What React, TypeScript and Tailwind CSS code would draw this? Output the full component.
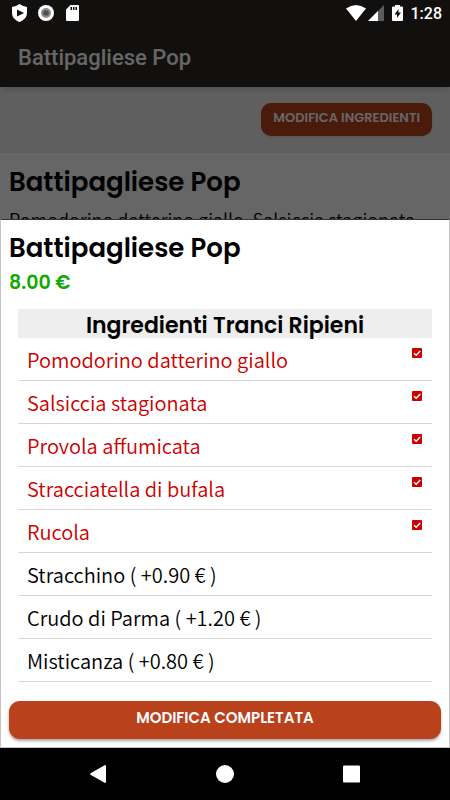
import { useState } from "react";

const heading = "font-['Poppins','Inter',sans-serif] font-semibold";
const body = "font-['Noto_Sans_CJK_JP','Noto_Sans',sans-serif] font-[350]";

interface Ingredient {
  id: string;
  name: string;
  price?: string;
}

const ingredients: Ingredient[] = [
  { id: "pomodorino", name: "Pomodorino datterino giallo" },
  { id: "salsiccia", name: "Salsiccia stagionata" },
  { id: "provola", name: "Provola affumicata" },
  { id: "stracciatella", name: "Stracciatella di bufala" },
  { id: "rucola", name: "Rucola" },
  { id: "stracchino", name: "Stracchino", price: "0.90" },
  { id: "crudo", name: "Crudo di Parma", price: "1.20" },
  { id: "misticanza", name: "Misticanza", price: "0.80" },
];

const StatusBar = () => (
  <div className="absolute inset-x-0 top-0 flex h-[26px] items-center justify-between pr-2 pl-3 text-white">
    <div className="flex items-center gap-3">
      <svg width="15" height="18" viewBox="0 0 15 18" fill="currentColor">
        <path fillRule="evenodd" d="M7.5 0Q11 2.500 15 3v6c0 5-4 7.500-7.500 9C4 16.500 0 14 0 9V3Q4 2.500 7.500 0zM5 5.500v7l7-3.500z" />
      </svg>
      <svg className="-ml-px" width="16" height="16" viewBox="0 0 16 16">
        <circle cx="8" cy="8" r="8" fill="#fff" />
        <circle cx="8" cy="8" r="5" fill="#8a8a8a" />
        <circle cx="8" cy="8" r="2.800" fill="#505050" />
      </svg>
      <svg width="13" height="16" viewBox="0 0 13 16" fill="currentColor">
        <path fillRule="evenodd" d="M4.500 0H12q1 0 1 1v14q0 1-1 1H1q-1 0-1-1V4.500zM4.500 2v3H6V2zM7 2v3h1.500V2zM9.500 2v3H11V2z" />
      </svg>
    </div>
    <div className="flex items-center">
      <svg width="20" height="16" viewBox="0 0 20 16" fill="currentColor">
        <path d="M0 3.500Q10-3.500 20 3.500L10 16z" />
      </svg>
      <svg className="ml-0.5" width="16" height="16" viewBox="0 0 16 16">
        <path d="M16 0v16H0z" fill="#5c5c5c" />
        <path d="M10 6v10H0z" fill="#fff" />
      </svg>
      <svg className="ml-2" width="11" height="16" viewBox="0 0 11 16" fill="currentColor">
        <path fillRule="evenodd" d="M3 1.500V0h5v1.500h2q1 0 1 1V15q0 1-1 1H1q-1 0-1-1V2.500q0-1 1-1zM6.500 4 2.500 9.500H5V13l4-5.500H6.500z" />
      </svg>
      <span className="ml-2 pt-0.5 font-['Roboto',sans-serif] text-base font-medium">1:28</span>
    </div>
  </div>
);

const NavBar = () => (
  <nav className="flex h-13 items-center justify-around bg-black px-8.5 text-white">
    <button type="button" aria-label="Indietro">
      <svg width="18" height="18" viewBox="0 0 18 18" fill="currentColor">
        <path d="M16 0q1 0 1 1v16q0 1-1 1L1.500 9.800q-1-.800 0-1.600z" />
      </svg>
    </button>
    <button type="button" aria-label="Home">
      <svg width="18" height="18" viewBox="0 0 18 18" fill="currentColor">
        <circle cx="9" cy="9" r="9" />
      </svg>
    </button>
    <button type="button" aria-label="Recenti">
      <svg width="18" height="18" viewBox="0 0 18 18" fill="currentColor">
        <rect x="0" y="0.500" width="17" height="17" rx="1" />
      </svg>
    </button>
  </nav>
);

interface IngredientRowProps {
  item: Ingredient;
  checked: boolean;
  onToggle: () => void;
}

const IngredientRow = ({ item, checked, onToggle }: IngredientRowProps) => (
  <li className="border-b border-[#d8d8d8]">
    <label className={`${body} flex h-[42px] items-start justify-between pr-2.5 pl-[9px] text-[20px] leading-[44px] ${checked ? "text-[#cc0000]" : "text-black"}`}>
      <span>
        {item.name}
        {item.price && ` ( +${item.price} € )`}
      </span>
      <input type="checkbox" className="sr-only" checked={checked} onChange={onToggle} />
      {checked && (
        <svg className="mt-2.5" width="10" height="10" viewBox="0 0 10 10">
          <rect width="10" height="10" rx="1" fill="#cc0000" />
          <path d="M2 5.200 4.200 7.200 8.200 3" fill="none" stroke="#fff" strokeWidth="1.500" />
        </svg>
      )}
    </label>
  </li>
);

export default function App() {
  const [selected, setSelected] = useState(["pomodorino", "salsiccia", "provola", "stracciatella", "rucola"]);

  const toggle = (id: string) =>
    setSelected((prev) => (prev.includes(id) ? prev.filter((x) => x !== id) : [...prev, id]));

  return (
    <div className="relative flex min-h-screen flex-col bg-white">
      <header className="z-0 bg-[#2b2823] px-4.5 pt-7 shadow-md">
        <div className="flex h-[59px] items-center font-['Roboto',sans-serif] text-[22px] font-medium text-white">Battipagliese Pop</div>
      </header>
      <div className="flex justify-end bg-[#eeeeee] px-4.5 pt-4 pb-[17px]">
        <button type="button" className={`${heading} h-[33px] rounded-[10px] bg-[#b9411c] px-3 pb-1 text-[13px] text-white shadow`}>
          MODIFICA INGREDIENTI
        </button>
      </div>
      <main className="px-[9px] pt-3 text-black">
        <h1 className={`${heading} text-[26px] leading-[34px]`}>Battipagliese Pop</h1>
        <p className={`${body} mt-1 truncate text-[18px] leading-[32px]`}>Pomodorino datterino giallo, Salsiccia stagionata</p>
      </main>

      {/* modal */}
      <div className="absolute inset-0 flex flex-col justify-end bg-black/60">
        <StatusBar />
        <section className="border border-[#c4c4c4] border-t-[#333] bg-white px-2 pt-2.5 pb-2">
          <h2 className={`${heading} text-[26px] leading-[36px] text-black`}>Battipagliese Pop</h2>
          <p className={`${heading} text-[19px] leading-[34px] text-[#11aa00]`}>8.00 €</p>
          <div className="mx-[9px] mt-[9px]">
            <h3 className={`${heading} bg-[#eeeeee] pt-[5px] text-center text-[22px] leading-[24px] text-black`}>Ingredienti Tranci Ripieni</h3>
            <ul>
              {ingredients.map((item) => (
                <IngredientRow key={item.id} item={item} checked={selected.includes(item.id)} onToggle={() => toggle(item.id)} />
              ))}
            </ul>
          </div>
          <button type="button" className={`${heading} mt-[19px] h-[38px] w-full rounded-[11px] bg-[#b9411c] pb-1 text-[15px] text-white shadow-[0_2px_3px_rgba(0,0,0,0.35)]`}>
            MODIFICA COMPLETATA
          </button>
        </section>
        <NavBar />
      </div>
    </div>
  );
}
